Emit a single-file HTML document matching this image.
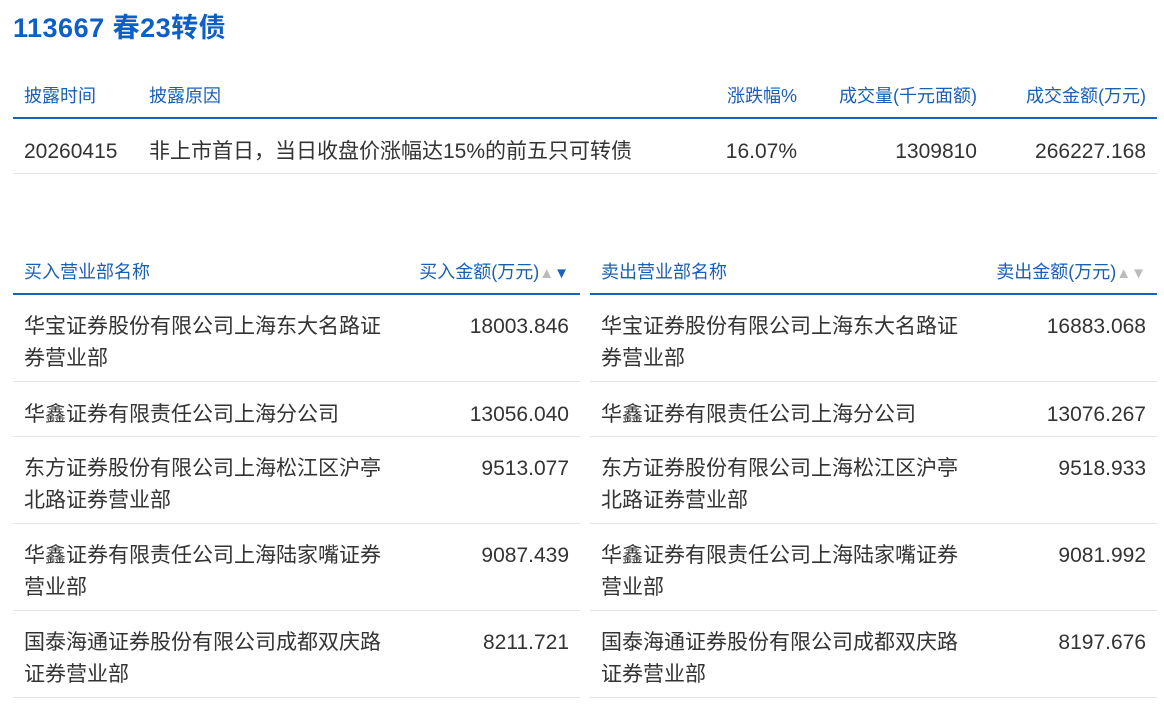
<!DOCTYPE html>
<html><head><meta charset="utf-8"><style>
body{margin:0;background:#fff;font-family:"Liberation Sans","Noto Sans CJK SC",sans-serif;color:#333;}
h1{position:absolute;left:13px;top:11px;margin:0;font-size:27px;font-weight:bold;color:#0b5fc6;line-height:34px;letter-spacing:0.5px}
table{position:absolute;border-collapse:collapse;table-layout:fixed;}
th{font-weight:normal;color:#1a5fb4;font-size:18px;text-align:left;padding:0 11px;height:44px;vertical-align:middle;border-bottom:2px solid #1565c0;}
td{font-size:21px;padding:0 11px;border-bottom:1px solid #e3e3e3;vertical-align:top;line-height:32px;}
td.n{padding-right:20px}
.r{text-align:right}
.s{color:#bbb;font-size:15px}.s b{color:#1565c0;font-weight:normal}
.m td{height:37px;padding-top:17px}
.t td{height:70px;padding-top:16px}
</style></head><body>
<h1>113667 春23转债</h1>
<table style="left:13px;top:73px;width:1144px">
<colgroup><col style="width:125px"><col style="width:560px"><col style="width:110px"><col style="width:180px"><col style="width:169px"></colgroup>
<tr><th>披露时间</th><th>披露原因</th><th class="r">涨跌幅%</th><th class="r">成交量(千元面额)</th><th class="r">成交金额(万元)</th></tr>
<tr class="m"><td>20260415</td><td>非上市首日，当日收盘价涨幅达15%的前五只可转债</td><td class="r">16.07%</td><td class="r">1309810</td><td class="r">266227.168</td></tr>
</table>
<table style="left:13px;top:249px;width:567px">
<colgroup><col style="width:392px"><col></colgroup>
<tr><th>买入营业部名称</th><th class="r">买入金额(万元)<span class="s">▲<b>▼</b></span></th></tr>
<tr class="t"><td class="n">华宝证券股份有限公司上海东大名路证券营业部</td><td class="r">18003.846</td></tr>
<tr class="m"><td class="n">华鑫证券有限责任公司上海分公司</td><td class="r">13056.040</td></tr>
<tr class="t"><td class="n">东方证券股份有限公司上海松江区沪亭北路证券营业部</td><td class="r">9513.077</td></tr>
<tr class="t"><td class="n">华鑫证券有限责任公司上海陆家嘴证券营业部</td><td class="r">9087.439</td></tr>
<tr class="t"><td class="n">国泰海通证券股份有限公司成都双庆路证券营业部</td><td class="r">8211.721</td></tr>
</table>
<table style="left:590px;top:249px;width:567px">
<colgroup><col style="width:392px"><col></colgroup>
<tr><th>卖出营业部名称</th><th class="r">卖出金额(万元)<span class="s">▲▼</span></th></tr>
<tr class="t"><td class="n">华宝证券股份有限公司上海东大名路证券营业部</td><td class="r">16883.068</td></tr>
<tr class="m"><td class="n">华鑫证券有限责任公司上海分公司</td><td class="r">13076.267</td></tr>
<tr class="t"><td class="n">东方证券股份有限公司上海松江区沪亭北路证券营业部</td><td class="r">9518.933</td></tr>
<tr class="t"><td class="n">华鑫证券有限责任公司上海陆家嘴证券营业部</td><td class="r">9081.992</td></tr>
<tr class="t"><td class="n">国泰海通证券股份有限公司成都双庆路证券营业部</td><td class="r">8197.676</td></tr>
</table>
</body></html>
